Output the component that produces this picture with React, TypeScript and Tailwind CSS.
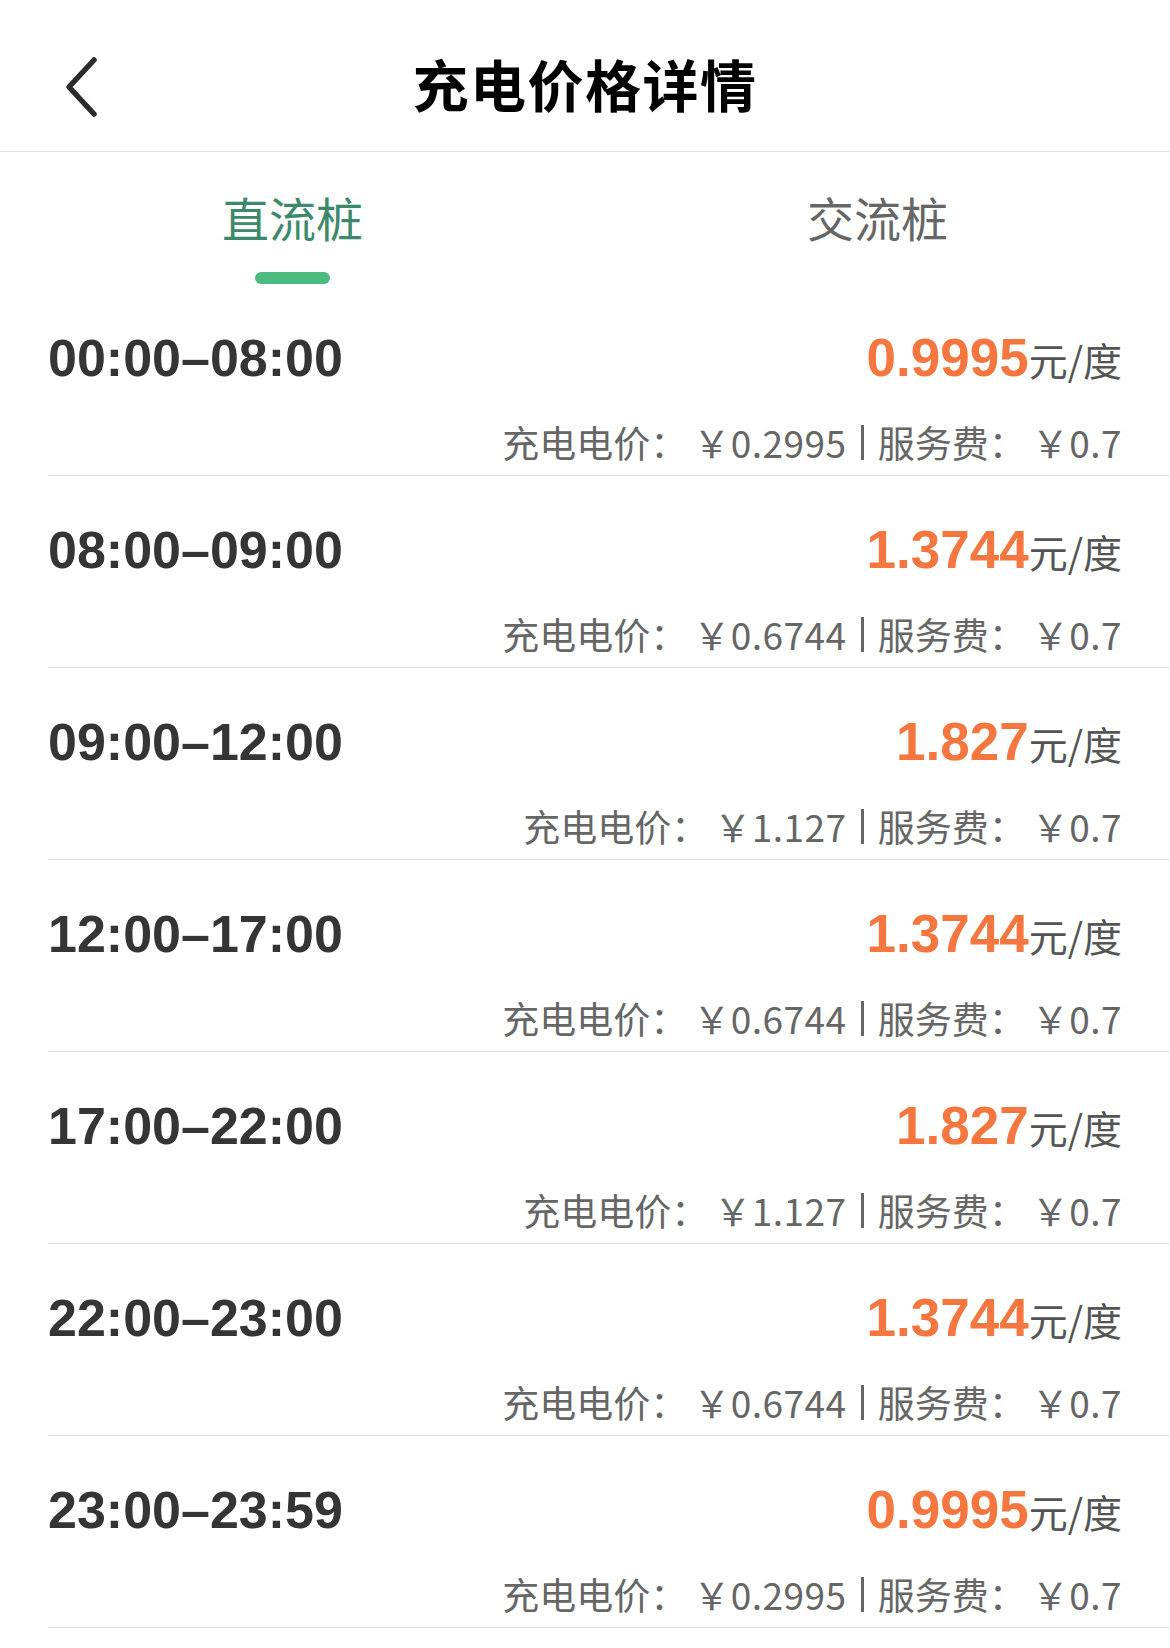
import { useState } from 'react';

const rows = [
  { time: '00:00–08:00', total: '0.9995', power: '0.2995', service: '0.7' },
  { time: '08:00–09:00', total: '1.3744', power: '0.6744', service: '0.7' },
  { time: '09:00–12:00', total: '1.827', power: '1.127', service: '0.7' },
  { time: '12:00–17:00', total: '1.3744', power: '0.6744', service: '0.7' },
  { time: '17:00–22:00', total: '1.827', power: '1.127', service: '0.7' },
  { time: '22:00–23:00', total: '1.3744', power: '0.6744', service: '0.7' },
  { time: '23:00–23:59', total: '0.9995', power: '0.2995', service: '0.7' },
];

const cjk = "font-['Noto_Sans_CJK_SC',sans-serif]";
const num = "font-['Liberation_Sans','Noto_Sans_CJK_SC',sans-serif]";

export default function App() {
  const [tab, setTab] = useState<'dc' | 'ac'>('dc');

  return (
    <div className={`min-h-screen bg-white ${cjk}`}>
      {/* header */}
      <div className="relative flex h-[152px] items-center justify-center border-b border-[#e3e3e3] pt-[14px]">
        <button className="absolute left-[58px] top-[52px] p-1 text-[#2b2b2b]">
          <svg width="38" height="62" viewBox="0 0 38 62" fill="none">
            <path d="M32 4 L7 31 L32 58" stroke="currentColor" strokeWidth="5.5" strokeLinecap="round" strokeLinejoin="round" />
          </svg>
        </button>
        <h1 className="text-[56px] font-bold leading-none tracking-[1.5px] text-black">充电价格详情</h1>
      </div>

      {/* tabs */}
      <div className="flex h-[132px]">
        {[
          { key: 'dc' as const, label: '直流桩' },
          { key: 'ac' as const, label: '交流桩' },
        ].map((t) => (
          <button
            key={t.key}
            onClick={() => setTab(t.key)}
            className="flex flex-1 flex-col items-center pt-[37px]"
          >
            <span
              className={`text-[47px] leading-[56px] ${
                tab === t.key ? 'text-[#3c8a6b]' : 'text-[#666]'
              }`}
            >
              {t.label}
            </span>
            <span
              className={`mt-[27px] h-[12px] w-[75px] rounded-full ${
                tab === t.key ? 'bg-[#4bbb80]' : 'bg-transparent'
              }`}
            />
          </button>
        ))}
      </div>

      {/* price list */}
      <div>
        {rows.map((r) => (
          <div key={r.time} className="ml-12 h-[192px] border-b border-[#e0e0e0] pr-12 pt-[44px]">
            <div className="flex items-baseline justify-between leading-[60px]">
              <span className={`${num} text-[52px] font-bold text-[#353535]`}>{r.time}</span>
              <span>
                <span className={`${num} text-[53px] font-bold text-[#f5773f]`}>{r.total}</span>
                <span className="text-[39px] text-[#555]">元/度</span>
              </span>
            </div>
            <div className="mt-[19px] flex items-center justify-end text-[37px] leading-[48px] text-[#666]">
              <span>充电电价：</span>
              <span className="ml-[6px] tracking-[0.5px]">￥{r.power}</span>
              <span className="mx-[14px] h-[35px] w-[3px] bg-[#666]" />
              <span>服务费：</span>
              <span className="ml-[6px] tracking-[0.5px]">￥{r.service}</span>
            </div>
          </div>
        ))}
      </div>
    </div>
  );
}
